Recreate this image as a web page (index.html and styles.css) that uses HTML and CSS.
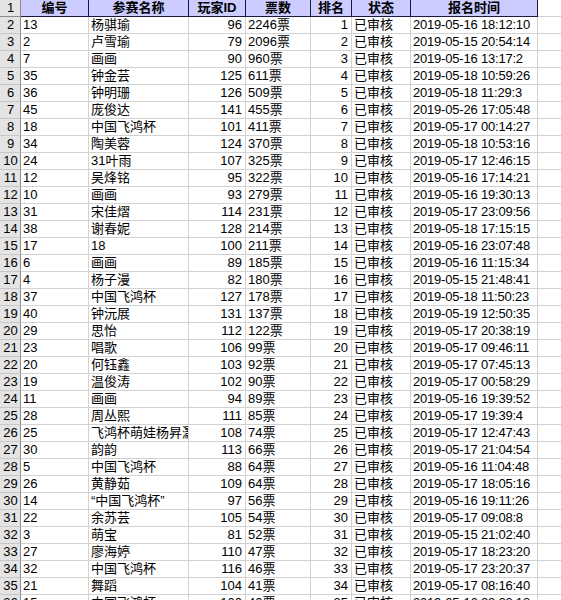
FILE: index.html
```html
<!DOCTYPE html>
<html lang="zh-CN">
<head>
<meta charset="utf-8">
<title>Sheet</title>
<link rel="stylesheet" href="styles.css">
</head>
<body>
<div class="sheet">
  <div class="row head">
    <div class="rh">1</div><div class="hc">编号</div><div class="hc">参赛名称</div><div class="hc">玩家ID</div><div class="hc">票数</div><div class="hc">排名</div><div class="hc">状态</div><div class="hc">报名时间</div><div class="c blank"></div>
  </div>
  <div class="row"><div class="rh">2</div><div class="c">13</div><div class="c">杨骐瑜</div><div class="c r">96</div><div class="c">2246票</div><div class="c r">1</div><div class="c">已审核</div><div class="c d">2019-05-16 18:12:10</div><div class="c"></div></div>
  <div class="row"><div class="rh">3</div><div class="c">2</div><div class="c">卢雪瑜</div><div class="c r">79</div><div class="c">2096票</div><div class="c r">2</div><div class="c">已审核</div><div class="c d">2019-05-15 20:54:14</div><div class="c"></div></div>
  <div class="row"><div class="rh">4</div><div class="c">7</div><div class="c">画画</div><div class="c r">90</div><div class="c">960票</div><div class="c r">3</div><div class="c">已审核</div><div class="c d">2019-05-16 13:17:2</div><div class="c"></div></div>
  <div class="row"><div class="rh">5</div><div class="c">35</div><div class="c">钟金芸</div><div class="c r">125</div><div class="c">611票</div><div class="c r">4</div><div class="c">已审核</div><div class="c d">2019-05-18 10:59:26</div><div class="c"></div></div>
  <div class="row"><div class="rh">6</div><div class="c">36</div><div class="c">钟明珊</div><div class="c r">126</div><div class="c">509票</div><div class="c r">5</div><div class="c">已审核</div><div class="c d">2019-05-18 11:29:3</div><div class="c"></div></div>
  <div class="row"><div class="rh">7</div><div class="c">45</div><div class="c">庞俊达</div><div class="c r">141</div><div class="c">455票</div><div class="c r">6</div><div class="c">已审核</div><div class="c d">2019-05-26 17:05:48</div><div class="c"></div></div>
  <div class="row"><div class="rh">8</div><div class="c">18</div><div class="c">中国飞鸿杯</div><div class="c r">101</div><div class="c">411票</div><div class="c r">7</div><div class="c">已审核</div><div class="c d">2019-05-17 00:14:27</div><div class="c"></div></div>
  <div class="row"><div class="rh">9</div><div class="c">34</div><div class="c">陶美蓉</div><div class="c r">124</div><div class="c">370票</div><div class="c r">8</div><div class="c">已审核</div><div class="c d">2019-05-18 10:53:16</div><div class="c"></div></div>
  <div class="row"><div class="rh">10</div><div class="c">24</div><div class="c">31叶雨</div><div class="c r">107</div><div class="c">325票</div><div class="c r">9</div><div class="c">已审核</div><div class="c d">2019-05-17 12:46:15</div><div class="c"></div></div>
  <div class="row"><div class="rh">11</div><div class="c">12</div><div class="c">吴烽铭</div><div class="c r">95</div><div class="c">322票</div><div class="c r">10</div><div class="c">已审核</div><div class="c d">2019-05-16 17:14:21</div><div class="c"></div></div>
  <div class="row"><div class="rh">12</div><div class="c">10</div><div class="c">画画</div><div class="c r">93</div><div class="c">279票</div><div class="c r">11</div><div class="c">已审核</div><div class="c d">2019-05-16 19:30:13</div><div class="c"></div></div>
  <div class="row"><div class="rh">13</div><div class="c">31</div><div class="c">宋佳熠</div><div class="c r">114</div><div class="c">231票</div><div class="c r">12</div><div class="c">已审核</div><div class="c d">2019-05-17 23:09:56</div><div class="c"></div></div>
  <div class="row"><div class="rh">14</div><div class="c">38</div><div class="c">谢春妮</div><div class="c r">128</div><div class="c">214票</div><div class="c r">13</div><div class="c">已审核</div><div class="c d">2019-05-18 17:15:15</div><div class="c"></div></div>
  <div class="row"><div class="rh">15</div><div class="c">17</div><div class="c">18</div><div class="c r">100</div><div class="c">211票</div><div class="c r">14</div><div class="c">已审核</div><div class="c d">2019-05-16 23:07:48</div><div class="c"></div></div>
  <div class="row"><div class="rh">16</div><div class="c">6</div><div class="c">画画</div><div class="c r">89</div><div class="c">185票</div><div class="c r">15</div><div class="c">已审核</div><div class="c d">2019-05-16 11:15:34</div><div class="c"></div></div>
  <div class="row"><div class="rh">17</div><div class="c">4</div><div class="c">杨子漫</div><div class="c r">82</div><div class="c">180票</div><div class="c r">16</div><div class="c">已审核</div><div class="c d">2019-05-15 21:48:41</div><div class="c"></div></div>
  <div class="row"><div class="rh">18</div><div class="c">37</div><div class="c">中国飞鸿杯</div><div class="c r">127</div><div class="c">178票</div><div class="c r">17</div><div class="c">已审核</div><div class="c d">2019-05-18 11:50:23</div><div class="c"></div></div>
  <div class="row"><div class="rh">19</div><div class="c">40</div><div class="c">钟沅展</div><div class="c r">131</div><div class="c">137票</div><div class="c r">18</div><div class="c">已审核</div><div class="c d">2019-05-19 12:50:35</div><div class="c"></div></div>
  <div class="row"><div class="rh">20</div><div class="c">29</div><div class="c">思怡</div><div class="c r">112</div><div class="c">122票</div><div class="c r">19</div><div class="c">已审核</div><div class="c d">2019-05-17 20:38:19</div><div class="c"></div></div>
  <div class="row"><div class="rh">21</div><div class="c">23</div><div class="c">唱歌</div><div class="c r">106</div><div class="c">99票</div><div class="c r">20</div><div class="c">已审核</div><div class="c d">2019-05-17 09:46:11</div><div class="c"></div></div>
  <div class="row"><div class="rh">22</div><div class="c">20</div><div class="c">何钰鑫</div><div class="c r">103</div><div class="c">92票</div><div class="c r">21</div><div class="c">已审核</div><div class="c d">2019-05-17 07:45:13</div><div class="c"></div></div>
  <div class="row"><div class="rh">23</div><div class="c">19</div><div class="c">温俊涛</div><div class="c r">102</div><div class="c">90票</div><div class="c r">22</div><div class="c">已审核</div><div class="c d">2019-05-17 00:58:29</div><div class="c"></div></div>
  <div class="row"><div class="rh">24</div><div class="c">11</div><div class="c">画画</div><div class="c r">94</div><div class="c">89票</div><div class="c r">23</div><div class="c">已审核</div><div class="c d">2019-05-16 19:39:52</div><div class="c"></div></div>
  <div class="row"><div class="rh">25</div><div class="c">28</div><div class="c">周丛熙</div><div class="c r">111</div><div class="c">85票</div><div class="c r">24</div><div class="c">已审核</div><div class="c d">2019-05-17 19:39:4</div><div class="c"></div></div>
  <div class="row"><div class="rh">26</div><div class="c">25</div><div class="c">飞鸿杯萌娃杨昇灏</div><div class="c r">108</div><div class="c">74票</div><div class="c r">25</div><div class="c">已审核</div><div class="c d">2019-05-17 12:47:43</div><div class="c"></div></div>
  <div class="row"><div class="rh">27</div><div class="c">30</div><div class="c">韵韵</div><div class="c r">113</div><div class="c">66票</div><div class="c r">26</div><div class="c">已审核</div><div class="c d">2019-05-17 21:04:54</div><div class="c"></div></div>
  <div class="row"><div class="rh">28</div><div class="c">5</div><div class="c">中国飞鸿杯</div><div class="c r">88</div><div class="c">64票</div><div class="c r">27</div><div class="c">已审核</div><div class="c d">2019-05-16 11:04:48</div><div class="c"></div></div>
  <div class="row"><div class="rh">29</div><div class="c">26</div><div class="c">黄静茹</div><div class="c r">109</div><div class="c">64票</div><div class="c r">28</div><div class="c">已审核</div><div class="c d">2019-05-17 18:05:16</div><div class="c"></div></div>
  <div class="row"><div class="rh">30</div><div class="c">14</div><div class="c">“中国飞鸿杯”</div><div class="c r">97</div><div class="c">56票</div><div class="c r">29</div><div class="c">已审核</div><div class="c d">2019-05-16 19:11:26</div><div class="c"></div></div>
  <div class="row"><div class="rh">31</div><div class="c">22</div><div class="c">余苏芸</div><div class="c r">105</div><div class="c">54票</div><div class="c r">30</div><div class="c">已审核</div><div class="c d">2019-05-17 09:08:8</div><div class="c"></div></div>
  <div class="row"><div class="rh">32</div><div class="c">3</div><div class="c">萌宝</div><div class="c r">81</div><div class="c">52票</div><div class="c r">31</div><div class="c">已审核</div><div class="c d">2019-05-15 21:02:40</div><div class="c"></div></div>
  <div class="row"><div class="rh">33</div><div class="c">27</div><div class="c">廖海婷</div><div class="c r">110</div><div class="c">47票</div><div class="c r">32</div><div class="c">已审核</div><div class="c d">2019-05-17 18:23:20</div><div class="c"></div></div>
  <div class="row"><div class="rh">34</div><div class="c">32</div><div class="c">中国飞鸿杯</div><div class="c r">116</div><div class="c">46票</div><div class="c r">33</div><div class="c">已审核</div><div class="c d">2019-05-17 23:20:37</div><div class="c"></div></div>
  <div class="row"><div class="rh">35</div><div class="c">21</div><div class="c">舞蹈</div><div class="c r">104</div><div class="c">41票</div><div class="c r">34</div><div class="c">已审核</div><div class="c d">2019-05-17 08:16:40</div><div class="c"></div></div>
  <div class="row"><div class="rh">36</div><div class="c">15</div><div class="c">中国飞鸿杯</div><div class="c r">100</div><div class="c">40票</div><div class="c r">35</div><div class="c">已审核</div><div class="c d">2019-05-16 22:23:18</div><div class="c"></div></div>
</div>
</body>
</html>
```
FILE: styles.css
```css
html, body {
  margin: 0;
  padding: 0;
  background: #fff;
  overflow: hidden;
}
.sheet {
  width: 561px;
  height: 600px;
  overflow: hidden;
  font-family: "Liberation Sans", "Noto Sans CJK SC", sans-serif;
  font-size: 13px;
  color: #000;
}
.row {
  display: grid;
  grid-template-columns: 21px 68px 100px 57px 65px 41px 59px 127px 100px;
  height: 17px;
}
.row > div {
  box-sizing: border-box;
  height: 17px;
  line-height: 16px;
  white-space: nowrap;
  overflow: hidden;
}
.rh {
  background: #e4e4e4;
  border-right: 1px solid #8e8e8e;
  border-bottom: 1px solid #c8c8c8;
  text-align: center;
  padding-left: 1px;
}
.c {
  border-right: 1px solid #d2d2d2;
  border-bottom: 1px solid #d2d2d2;
  padding: 0 2px 0 2px;
}
.c.r {
  text-align: right;
  padding-right: 3px;
}
.c.d {
  letter-spacing: -0.2px;
}
.hc {
  background: #ccccff;
  border-right: 1px solid #1a1a40;
  border-bottom: 1px solid #1a1a40;
  text-align: center;
  font-weight: bold;
}
.head .rh {
  border-bottom: 1px solid #8e8e8e;
}
.head .blank {
  border-right: none;
}
```
